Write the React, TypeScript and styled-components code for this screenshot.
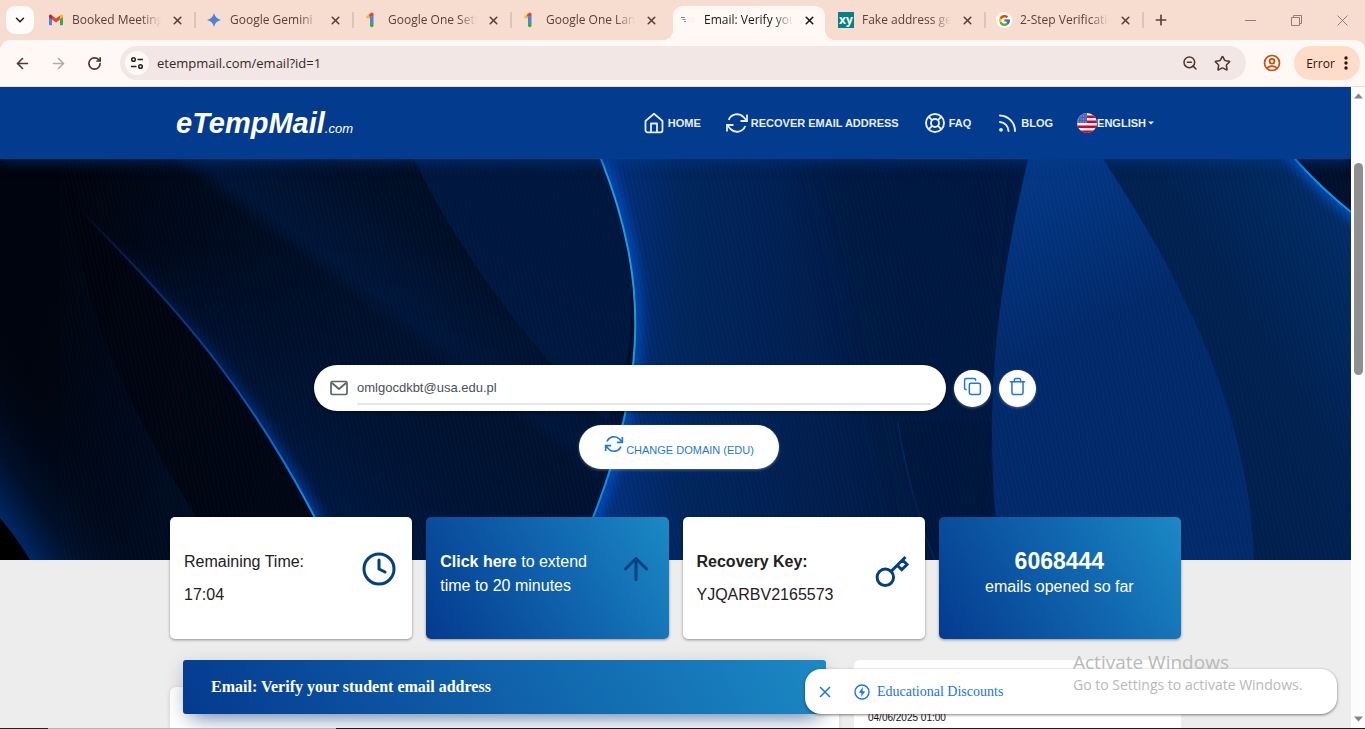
import React from "react";
import styled, { createGlobalStyle, css } from "styled-components";
import { FcGoogle } from "react-icons/fc";
import { ArrowUp, Clock, Copy, Trash, ZoomOut, Star, ArrowLeft, ArrowRight, X, Plus, ChevronDown, RotateCw } from "lucide-react";

const ui = `"Segoe UI", "Open Sans", "Noto Sans", sans-serif`;
const sans = `Arial, "Liberation Sans", sans-serif`;
const serif = `"Times New Roman", "Liberation Serif", serif`;

const GlobalStyle = createGlobalStyle`
  *, *::before, *::after { box-sizing: border-box; }
  body { margin: 0; font-family: ${sans}; overflow: hidden; }
  button, input { font: inherit; color: inherit; border: 0; padding: 0; background: none; }
  button { cursor: pointer; }
  a { color: inherit; text-decoration: none; }
  p, h1, h2, h3 { margin: 0; font-weight: 400; }
  svg { display: block; flex: none; }
`;

const Window = styled.div`
  display: flex;
  flex-direction: column;
  height: 100vh;
  background: #f7ddd0;
`;

/* ---------- browser chrome ---------- */

const TabStrip = styled.div`
  display: flex;
  align-items: center;
  flex: none;
  height: 40px;
  padding-left: 6px;
  font-family: ${ui};
  font-size: 12px;
  color: #5a4037;
`;

const TabSearch = styled.button`
  display: grid;
  place-items: center;
  width: 28px;
  height: 28px;
  margin-right: 4px;
  border-radius: 9px;
  background: #fffcfb;
  color: #1f1a18;
`;

const TabItem = styled.div<{ $active?: boolean; $divider?: boolean }>`
  position: relative;
  display: flex;
  align-items: center;
  gap: 8px;
  flex: 0 1 158px;
  min-width: 0;
  height: 40px;
  padding: 0 11px 0 10px;
  isolation: isolate;

  ${(p) =>
    p.$divider &&
    css`
      &::after {
        content: "";
        position: absolute;
        right: 0;
        top: 12px;
        width: 2px;
        height: 16px;
        background: #dac5bb;
      }
    `}

  ${(p) =>
    p.$active &&
    css`
      color: #1f1a18;
      &::before {
        content: "";
        position: absolute;
        z-index: -1;
        inset: 6px 3px 0;
        border-radius: 10px 10px 0 0;
        background: #fff8f5;
      }
      &::after {
        content: "";
        position: absolute;
        z-index: -1;
        left: -7px;
        right: -7px;
        bottom: 0;
        height: 10px;
        background:
          radial-gradient(circle at 0 0, transparent 10px, #fff8f5 10px) left / 10px 10px no-repeat,
          radial-gradient(circle at 100% 0, transparent 10px, #fff8f5 10px) right / 10px 10px no-repeat;
      }
    `}
`;

const TabTitle = styled.span`
  flex: 1;
  min-width: 0;
  overflow: hidden;
  white-space: nowrap;
  line-height: 20px;
  mask-image: linear-gradient(to right, #000 78%, transparent 100%);
`;

const TabClose = styled.button`
  display: grid;
  place-items: center;
  width: 16px;
  height: 16px;
`;

const NewTab = styled.button`
  display: grid;
  place-items: center;
  width: 34px;
  height: 28px;
`;

const WindowControls = styled.div`
  display: flex;
  margin-left: auto;
  color: #8f7d75;
`;

const WindowButton = styled.button`
  display: grid;
  place-items: center;
  width: 46px;
  height: 40px;
`;

const Toolbar = styled.div`
  display: flex;
  align-items: center;
  flex: none;
  height: 47px;
  padding: 0 5px 0 4px;
  border-radius: 10px 10px 0 0;
  border-bottom: 1px solid #f1ddd4;
  background: #fff8f5;
  color: #50372d;
  font-family: ${ui};
`;

const ToolButton = styled.button<{ $muted?: boolean; $accent?: boolean }>`
  display: grid;
  place-items: center;
  width: 36px;
  height: 34px;
  color: ${(p) => (p.$accent ? "#c84e0c" : p.$muted ? "#b5aaa6" : "inherit")};
`;

const Omnibox = styled.div`
  display: flex;
  align-items: center;
  flex: 1;
  min-width: 0;
  height: 34px;
  margin: 0 8px;
  padding: 0 8px 0 5px;
  border-radius: 17px;
  background: #f2e7e4;
`;

const SiteInfo = styled.button`
  display: grid;
  place-items: center;
  width: 24px;
  height: 24px;
  border-radius: 50%;
  background: #fff8f5;
  color: #2b211d;
`;

const UrlInput = styled.input`
  flex: 1;
  min-width: 0;
  margin-left: 8px;
  outline: 0;
  color: #332a27;
  font-size: 13px;
  line-height: 20px;
`;

const OmniButton = styled(ToolButton)`
  width: 32px;
`;

const ErrorMenu = styled.button`
  display: flex;
  align-items: center;
  justify-content: center;
  gap: 9px;
  width: 66px;
  height: 34px;
  margin-left: 4px;
  border-radius: 17px;
  background: #ffdcc9;
  color: #33120a;
  font-size: 12px;
`;

/* ---------- page viewport ---------- */

const Viewport = styled.div`
  position: relative;
  display: flex;
  flex: 1;
  min-height: 0;
`;

const Page = styled.div`
  flex: 1;
  min-width: 0;
  overflow: hidden;
  background: #ededed;
  color: #212121;
`;

const Scrollbar = styled.div`
  display: flex;
  flex-direction: column;
  align-items: center;
  width: 14px;
  padding: 6px 0;
  background: #fcfcfc;
`;

const Thumb = styled.div`
  width: 9px;
  height: 212px;
  margin: 64px 0 auto;
  border-radius: 5px;
  background: #8f8f8f;
`;

const Header = styled.header`
  position: relative;
  z-index: 1;
  background: #033b8e;
  box-shadow: 0 4px 12px rgba(3, 59, 142, 0.5);
`;

const Container = styled.div`
  width: min(1011px, calc(100% - 32px));
  margin: 0 auto;
`;

const HeaderRow = styled(Container)`
  display: flex;
  align-items: center;
  justify-content: space-between;
  height: 72px;
  padding: 0 27px 0 6px;
`;

const Logo = styled.a`
  padding-top: 6px;
  color: #fff;
  font-size: 29px;
  font-weight: 700;
  font-style: italic;
  line-height: 36px;
`;

const LogoSuffix = styled.span`
  font-size: 13px;
  font-weight: 400;
`;

const Nav = styled.nav`
  display: flex;
  align-items: center;
  gap: 24px;
  color: #e9eef7;
  font-size: 11px;
  font-weight: 700;
  line-height: 24px;
  text-transform: uppercase;
`;

const NavLink = styled.a`
  display: flex;
  align-items: center;
  gap: 2px;
  white-space: nowrap;
`;

const LanguageButton = styled.button`
  display: flex;
  align-items: center;
  text-transform: uppercase;
`;

const Hero = styled.section`
  position: relative;
  height: 401px;
  padding: 206px 0 0 7px;
  background: #000d24;
`;

const HeroArt = styled.svg`
  position: absolute;
  inset: 0;
  width: 100%;
  height: 100%;
`;

const Mailbox = styled.div`
  position: relative;
  display: flex;
  align-items: center;
  justify-content: center;
`;

const AddressPill = styled.label`
  display: flex;
  align-items: center;
  gap: 9px;
  flex: 0 1 632px;
  height: 46px;
  margin-right: 8px;
  padding: 0 15px 0 16px;
  border-radius: 23px;
  background: #fff;
  color: #5a616b;
  box-shadow: 0 1px 3px rgba(0, 0, 0, 0.5);
`;

const AddressInput = styled.input`
  flex: 1;
  min-width: 0;
  height: 33px;
  border-bottom: 2px solid #e6e6e6;
  outline: 0;
  color: #495057;
  font-size: 13px;
`;

const RoundButton = styled.button`
  display: flex;
  justify-content: center;
  width: 37px;
  height: 37px;
  margin-right: 8px;
  padding-top: 7px;
  border-radius: 50%;
  background: #fff;
  color: #1f78d8;
  box-shadow: 0 1px 3px rgba(255, 255, 255, 0.3);
`;

const DomainButton = styled.button`
  position: relative;
  display: flex;
  align-items: baseline;
  justify-content: center;
  gap: 2px;
  width: 200px;
  height: 44px;
  margin: 14px auto 0;
  padding-top: 9px;
  border-radius: 22px;
  background: #fff;
  color: #1f78d8;
  font-size: 11px;
  line-height: 20px;
  text-transform: uppercase;
  box-shadow: 0 1px 3px rgba(255, 255, 255, 0.3);
`;

const Stats = styled(Container)`
  position: relative;
  display: grid;
  grid-template-columns: repeat(4, 1fr);
  gap: 14px;
  margin-top: -43px;
`;

const StatCard = styled.article<{ $blue?: boolean; $center?: boolean }>`
  display: flex;
  justify-content: ${(p) => (p.$center ? "center" : "space-between")};
  height: 122px;
  padding: 33px 15px 0 14px;
  border-radius: 5px;
  background: ${(p) => (p.$blue ? "linear-gradient(60deg, #043a8f 0%, #1168b0 60%, #1b89c4 100%)" : "#fff")};
  color: ${(p) => (p.$blue ? "#fff" : "#212121")};
  text-align: ${(p) => (p.$center ? "center" : "left")};
  font-size: 16px;
  line-height: 24px;
  box-shadow: 0 1px 3px rgba(0, 0, 0, 0.4);
`;

const StatValue = styled.p`
  margin-top: 9px;
`;

const StatNumber = styled.h3`
  margin-bottom: 3px;
  font-size: 23px;
  font-weight: 700;
  line-height: 22px;
`;

const ExtendButton = styled.button`
  width: 160px;
  height: 48px;
  text-align: left;
`;

const StatIcon = styled.span`
  padding-top: 1px;
  color: #03407f;
`;

const Columns = styled(Container)`
  display: grid;
  grid-template-columns: 1fr 327px;
  gap: 15px;
  padding-top: 21px;
`;

/* flow-root keeps the banner's lift over the card's top edge from collapsing */
const MailCard = styled.article`
  display: flow-root;
  height: 300px;
  margin-top: 27px;
  padding: 0 13px;
  border-radius: 6px;
  background: #fff;
  box-shadow: 0 1px 4px rgba(0, 0, 0, 0.14);
`;

const MailTitle = styled.h2`
  display: flex;
  align-items: center;
  height: 54px;
  margin-top: -27px;
  padding: 0 28px;
  border-radius: 3px;
  background: linear-gradient(60deg, #043a8f 0%, #1b89c4 100%);
  color: #fff;
  font-family: ${serif};
  font-size: 16px;
  font-weight: 700;
  box-shadow: 0 12px 20px -10px rgba(6, 65, 140, 0.6), 0 4px 20px 0 rgba(0, 0, 0, 0.14);
`;

const SideCard = styled.aside`
  height: 300px;
  padding: 52px 14px 0;
  border-radius: 6px;
  background: #fff;
  color: #111;
  font-size: 10px;
  line-height: 12px;
`;

const Toast = styled.div`
  position: absolute;
  right: 28px;
  bottom: 14px;
  display: flex;
  align-items: center;
  width: 532px;
  height: 45px;
  padding: 0 12px;
  border-radius: 16px;
  background: #fff;
  color: #1a73e8;
  font-family: ${serif};
  font-size: 14px;
  line-height: 16px;
  box-shadow: 0 1px 3px rgba(0, 0, 0, 0.5);
`;

const ToastClose = styled.button`
  display: grid;
  place-items: center;
  width: 16px;
  height: 16px;
`;

const ToastLink = styled.a`
  display: flex;
  align-items: center;
  gap: 7px;
  margin-left: 21px;
`;

const Watermark = styled.div`
  position: absolute;
  right: 30px;
  bottom: 33px;
  width: 262px;
  color: #b9b9b9;
  font-family: ${ui};
  font-size: 14px;
  line-height: 20px;
  white-space: nowrap;
  pointer-events: none;
`;

const WatermarkTitle = styled.p`
  font-size: 19px;
  line-height: 25px;
`;

const TaskbarEdge = styled.div`
  flex: none;
  height: 1px;
  background: linear-gradient(to right, #222 48px, #b4b4b4 48px 336px, #1c1c1c 336px);
`;

/* ---------- drawings ---------- */

const GmailIcon = () => (
  <svg width="16" height="16" viewBox="0 0 16 16">
    <path d="M1 4v8.300a1 1 0 0 0 1 1h2V6.500z" fill="#4285f4" />
    <path d="M15 4v8.300a1 1 0 0 1-1 1h-2V6.500z" fill="#34a853" />
    <path d="M12 3.500v4L15 5.200V4a1.500 1.500 0 0 0-2.400-1.200z" fill="#fbbc04" />
    <path d="M4 7.500v-4l4 3 4-3v4l-4 3z" fill="#ea4335" />
    <path d="M1 4v1.200l3 2.300v-4l-.6-.7A1.500 1.500 0 0 0 1 4z" fill="#c5221f" />
  </svg>
);

const GeminiIcon = () => (
  <svg width="16" height="16" viewBox="0 0 16 16">
    <defs>
      <linearGradient id="gem" x1="0" y1="0" x2="1" y2="1">
        <stop offset="0" stopColor="#9a72c8" />
        <stop offset=".45" stopColor="#4d7fd6" />
        <stop offset="1" stopColor="#2f9bdc" />
      </linearGradient>
    </defs>
    <path d="M8 1C8.800 4.800 11.200 7.200 15 8c-3.800.8-6.200 3.200-7 7-.8-3.800-3.200-6.200-7-7 3.800-.8 6.200-3.200 7-7z" fill="url(#gem)" />
  </svg>
);

const GoogleOneIcon = () => (
  <svg width="16" height="16" viewBox="0 0 16 16">
    <path d="M2.200 5.200 6 1.900 7.500 5.800H3z" fill="#fbbc04" stroke="#fbbc04" strokeLinejoin="round" />
    <path d="M5.200 4.500V2.600L7 1a1.500 1.500 0 0 1 2.500 1.200v2.300z" fill="#ea4335" />
    <path d="M6 4.200h3.500v6.600H6z" fill="#4285f4" />
    <path d="M6 10.500h3.500v2.900a1.700 1.700 0 0 1-3.500 0z" fill="#34a853" />
  </svg>
);

const SpeedMailIcon = () => (
  <svg width="16" height="16" viewBox="0 0 16 16">
    <path d="M1 5.500h4M2.500 7.500h3M4 9.500h2" stroke="#8c8784" />
    <path d="M7 5h8v6H7z" fill="#f8f5f4" />
  </svg>
);

const XyBadge = styled.span`
  display: grid;
  place-items: center;
  flex: none;
  width: 16px;
  height: 16px;
  background: #067f86;
  color: #fff;
  font-size: 12px;
  font-weight: 700;
  line-height: 14px;
`;

const GoogleBadge = styled.span`
  display: grid;
  place-items: center;
  flex: none;
  width: 16px;
  height: 16px;
  border-radius: 50%;
  background: #fff;
`;

const TuneIcon = () => (
  <svg width="14" height="14" viewBox="0 0 14 14" fill="none" stroke="currentColor" strokeWidth="1.500">
    <circle cx="3.500" cy="3.500" r="1.800" />
    <path d="M7.500 3.500H13M1 10.500h5.500" />
    <circle cx="10.500" cy="10.500" r="1.800" />
  </svg>
);

const ProfileIcon = () => (
  <svg width="18" height="18" viewBox="0 0 18 18" fill="none" stroke="currentColor" strokeWidth="1.700">
    <circle cx="9" cy="9" r="7.500" />
    <circle cx="9" cy="7.200" r="2.400" />
    <path d="M3.800 14c2.800-2.600 7.600-2.600 10.400 0" />
  </svg>
);

const HomeIcon = () => (
  <svg width="24" height="24" viewBox="0 0 24 24" fill="none" stroke="currentColor" strokeWidth="1.800" strokeLinejoin="round">
    <path d="M3.500 10 12 2.800l8.500 7.200v9.300a2 2 0 0 1-2 2h-13a2 2 0 0 1-2-2z" />
    <path d="M9 21v-8.500h6V21" />
  </svg>
);

const RefreshIcon = ({ size, weight }: { size: number; weight: number }) => (
  <svg width={size} height={size} viewBox="0 0 24 24" fill="none" stroke="currentColor" strokeWidth={weight}>
    <path d="M22 3.500V10h-6.500M2 20.500V14h6.500" />
    <path d="M3.700 9A9 9 0 0 1 18.500 6L22 10M2 14l3.500 4A9 9 0 0 0 20.300 15" />
  </svg>
);

const LifeRingIcon = () => (
  <svg width="24" height="24" viewBox="0 0 24 24" fill="none" stroke="currentColor" strokeWidth="1.900">
    <circle cx="12" cy="12" r="9" />
    <circle cx="12" cy="12" r="4" />
    <path d="m5.600 5.600 3.500 3.500M14.900 14.900l3.500 3.500M18.400 5.600l-3.500 3.500M9.100 14.900l-3.500 3.500" />
  </svg>
);

const RssIcon = () => (
  <svg width="24" height="24" viewBox="0 0 24 24" fill="none" stroke="currentColor" strokeWidth="1.900" strokeLinecap="round">
    <path d="M5 11a9 9 0 0 1 8.500 9M5 4.500A15.500 15.500 0 0 1 20 20" />
    <circle cx="6" cy="18.800" r="1.900" fill="currentColor" stroke="none" />
  </svg>
);

const FlagIcon = () => (
  <svg width="20" height="20" viewBox="0 0 20 20">
    <clipPath id="flagClip">
      <circle cx="10" cy="10" r="10" />
    </clipPath>
    <g clipPath="url(#flagClip)">
      <path fill="#f2f2f2" d="M0 0h20v20H0z" />
      <path fill="#d80027" d="M10 2.500h10V5H10zM10 7.500h10V10H10zM0 12.500h20V15H0zM0 17.500h20V20H0z" />
      <path fill="#4a62bd" d="M0 0h10v10H0z" />
      <path d="M1 3h9M1 6h9M1 9h9" stroke="#9aa9e0" strokeDasharray="1 1.500" />
    </g>
  </svg>
);

const MailIcon = () => (
  <svg width="18" height="16" viewBox="0 0 18 16" fill="none" stroke="currentColor" strokeWidth="1.700" strokeLinejoin="round">
    <rect x="1" y="1.500" width="16" height="13" rx="1.500" />
    <path d="m2 3 7 6 7-6" />
  </svg>
);

const KeyIcon = () => (
  <svg width="36" height="39" viewBox="0 -2 24 26" fill="none" stroke="currentColor" strokeWidth="2">
    <path d="M21 2l-2 2m-7.610 7.610a5.500 5.500 0 1 1-7.778 7.778 5.500 5.500 0 0 1 7.777-7.777zm0 0L15.500 7.500m0 0l3 3L22 7l-3-3m-3.500 3.500L19 4" />
  </svg>
);

const BoltIcon = () => (
  <svg width="16" height="16" viewBox="0 0 16 16" fill="none" stroke="currentColor" strokeWidth="1.400">
    <circle cx="8" cy="8" r="7" />
    <path d="M8.800 3 4.900 8.800h2.600L7.200 13l3.900-5.800H8.500z" fill="currentColor" stroke="none" />
  </svg>
);

const Waves = () => (
  <HeroArt viewBox="0 159 1351 401" preserveAspectRatio="none" aria-hidden="true">
    <defs>
      <linearGradient id="base" gradientUnits="userSpaceOnUse" x1="60" x2="620" y1="260" y2="420">
        <stop offset="0" stopColor="#00040e" />
        <stop offset=".25" stopColor="#000a1e" />
        <stop offset=".55" stopColor="#001029" />
        <stop offset="1" stopColor="#001130" />
      </linearGradient>
      <linearGradient id="bandD" gradientUnits="userSpaceOnUse" x1="277" y1="241" x2="385" y2="97">
        <stop offset="0" stopColor="#001c4a" stopOpacity="0" />
        <stop offset=".1" stopColor="#001a44" stopOpacity=".65" />
        <stop offset=".55" stopColor="#000e26" stopOpacity=".7" />
        <stop offset="1" stopColor="#000b1e" stopOpacity=".9" />
      </linearGradient>
      <linearGradient id="sail" gradientUnits="userSpaceOnUse" x1="215" y1="430" x2="480" y2="300">
        <stop offset="0" stopColor="#00286a" stopOpacity=".8" />
        <stop offset=".25" stopColor="#001c4c" stopOpacity=".7" />
        <stop offset="1" stopColor="#001538" stopOpacity=".3" />
      </linearGradient>
      <linearGradient id="fadeDown" x1="0" x2="0" y1="0" y2="1">
        <stop offset=".2" stopColor="#000" />
        <stop offset=".95" stopColor="#fff" />
      </linearGradient>
      <mask id="lower" maskUnits="userSpaceOnUse" x="0" y="159" width="1351" height="401">
        <path fill="url(#fadeDown)" d="M0 159h1351v401H0z" />
      </mask>
      <linearGradient id="edgeA" x1="0" x2="0" y1="0" y2="1">
        <stop offset="0" stopColor="#0054c8" stopOpacity="0" />
        <stop offset=".25" stopColor="#0a3a90" stopOpacity=".8" />
        <stop offset=".5" stopColor="#0a4ab4" />
        <stop offset=".8" stopColor="#0a88f0" />
        <stop offset="1" stopColor="#22b4ff" />
      </linearGradient>
      <linearGradient id="edgeB" x1="0" x2="0" y1="0" y2="1">
        <stop offset="0" stopColor="#20a4e8" />
        <stop offset=".5" stopColor="#169fd8" />
        <stop offset="1" stopColor="#1488dc" />
      </linearGradient>
      <linearGradient id="rightField" gradientUnits="userSpaceOnUse" x1="600" x2="1000" y1="0" y2="0">
        <stop offset="0" stopColor="#033284" />
        <stop offset=".2" stopColor="#01265f" />
        <stop offset=".6" stopColor="#011d4c" />
        <stop offset="1" stopColor="#011a44" />
      </linearGradient>
      <linearGradient id="leaf" x1="0" x2="0.3" y1="0" y2="1">
        <stop offset="0" stopColor="#043b8c" />
        <stop offset=".5" stopColor="#022a6c" />
        <stop offset="1" stopColor="#022b6c" />
      </linearGradient>
      <linearGradient id="farRight" x1="0" x2="1" y1="1" y2="0">
        <stop offset="0" stopColor="#011d4a" />
        <stop offset=".6" stopColor="#012252" />
        <stop offset="1" stopColor="#02306f" />
      </linearGradient>
      <linearGradient id="cornerL" gradientUnits="userSpaceOnUse" x1="10" y1="550" x2="110" y2="480">
        <stop offset="0" stopColor="#00307c" />
        <stop offset=".4" stopColor="#001434" stopOpacity=".7" />
        <stop offset="1" stopColor="#000612" stopOpacity="0" />
      </linearGradient>
      <filter id="soft" x="-20%" y="-20%" width="140%" height="140%">
        <feGaussianBlur stdDeviation="14" />
      </filter>
      <filter id="glow" x="-40%" y="-20%" width="180%" height="140%">
        <feGaussianBlur stdDeviation="5" />
      </filter>
      <pattern id="grain" width="4" height="4" patternUnits="userSpaceOnUse" patternTransform="rotate(-12)">
        <path d="M1 0v4" stroke="#1a62c8" strokeOpacity=".05" />
        <path d="M3 0v4" stroke="#000" strokeOpacity=".08" />
      </pattern>
      <clipPath id="rightOfB">
        <path d="M601 159C649 280 652 390 575 560H1351V159z" />
      </clipPath>
      <clipPath id="rightOfA">
        <path d="M40 159L80 210C180 310 260 400 336 560H1351V159z" />
      </clipPath>
      <clipPath id="belowG">
        <path d="M1295 159 Q1321 188 1351 212V560H1100V159z" />
      </clipPath>
    </defs>

    <path fill="url(#base)" d="M0 159h1351v401H0z" />
    <path fill="#00030c" opacity=".7" d="M65 159C75 300 130 420 225 560H336C260 400 180 310 80 210z" />
    <path fill="url(#cornerL)" d="M0 330C50 400 90 480 140 560H0z" />
    <path fill="#000" d="M0 518Q17 538 30 560H0z" />

    <g clipPath="url(#rightOfA)">
      <path fill="url(#bandD)" d="M60 159H660V560H60z" />
    </g>
    <g clipPath="url(#rightOfA)" mask="url(#lower)">
      <path fill="url(#sail)" d="M30 159H660V560H336z" />
      <path d="M80 210C180 310 260 400 336 560" fill="none" stroke="#004fd0" strokeOpacity=".6" strokeWidth="14" filter="url(#glow)" />
    </g>
    <path fill="#001a44" opacity=".85" d="M414 159C450 235 520 340 607 422C648 330 632 240 601 159z" />
    <path d="M80 210C180 310 260 400 336 560" fill="none" stroke="url(#edgeA)" strokeWidth="2" />

    <g clipPath="url(#rightOfB)">
      <path fill="url(#rightField)" d="M560 159h791v401H560z" />
      <path fill="#01153b" opacity=".4" filter="url(#soft)" d="M800 140H1020L985 580H900C880 440 850 300 800 140z" />
      <path d="M601 159C649 280 652 390 575 560" fill="none" stroke="#0356d0" strokeOpacity=".6" strokeWidth="16" filter="url(#glow)" />
    </g>
    <path d="M601 159C649 280 652 390 575 560" fill="none" stroke="url(#edgeB)" strokeWidth="2" />
    <path fill="#011338" opacity=".4" d="M898 422C905 470 922 530 935 560H1000L992 422z" />
    <path d="M898 422C905 470 922 530 935 560" fill="none" stroke="#02357c" strokeOpacity=".7" />

    <path fill="url(#farRight)" d="M1103 159H1351V560H1254C1250 420 1190 290 1103 159z" />
    <path fill="url(#leaf)" d="M1028 159C1000 280 980 400 1000 560H1254C1250 420 1190 290 1103 159z" />
    <g clipPath="url(#belowG)">
      <path d="M1285 148Q1321 188 1361 220" fill="none" stroke="#0358d8" strokeOpacity=".7" strokeWidth="14" filter="url(#glow)" />
    </g>
    <path fill="#00102c" d="M1295 159Q1321 188 1351 212V159z" />
    <path d="M1295 159Q1321 188 1351 212" fill="none" stroke="#1496e8" strokeWidth="2" />
    <path fill="url(#grain)" d="M60 159h1291v401H60z" />
  </HeroArt>
);

/* ---------- data ---------- */

type Tab = { title: string; icon: React.ReactNode; active?: boolean; divider?: boolean };

const tabs: Tab[] = [
  { title: "Booked Meeting", icon: <GmailIcon />, divider: true },
  { title: "Google Gemini", icon: <GeminiIcon />, divider: true },
  { title: "Google One Settings", icon: <GoogleOneIcon />, divider: true },
  { title: "Google One Landing", icon: <GoogleOneIcon /> },
  { title: "Email: Verify your student", icon: <SpeedMailIcon />, active: true },
  { title: "Fake address generator", icon: <XyBadge>xy</XyBadge>, divider: true },
  { title: "2-Step Verification", icon: <GoogleBadge><FcGoogle size={13} /></GoogleBadge>, divider: true },
];

const links = [
  { label: "Home", icon: <HomeIcon /> },
  { label: "Recover email address", icon: <RefreshIcon size={24} weight={1.8} /> },
  { label: "FAQ", icon: <LifeRingIcon /> },
  { label: "Blog", icon: <RssIcon /> },
];

export default function App() {
  return (
    <Window>
      <GlobalStyle />
      <TabStrip>
        <TabSearch aria-label="Search tabs"><ChevronDown size={14} strokeWidth={2.5} /></TabSearch>
        {tabs.map((t) => (
          <TabItem key={t.title} $active={t.active} $divider={t.divider}>
            {t.icon}
            <TabTitle>{t.title}</TabTitle>
            <TabClose aria-label="Close tab"><X size={13} strokeWidth={3} /></TabClose>
          </TabItem>
        ))}
        <NewTab aria-label="New tab"><Plus size={16} strokeWidth={2.5} /></NewTab>
        <WindowControls>
          <WindowButton aria-label="Minimize">
            <svg width="11" height="11" viewBox="0 0 11 11" stroke="currentColor"><path d="M0 5.500h11" /></svg>
          </WindowButton>
          <WindowButton aria-label="Restore">
            <svg width="11" height="11" viewBox="0 0 11 11" fill="none" stroke="currentColor"><path d="M.5 2.500h8v8h-8zM2.500 2.500v-2h8v8h-2" /></svg>
          </WindowButton>
          <WindowButton aria-label="Close">
            <svg width="11" height="11" viewBox="0 0 11 11" stroke="currentColor"><path d="m.5.5 10 10m0-10-10 10" /></svg>
          </WindowButton>
        </WindowControls>
      </TabStrip>

      <Toolbar>
        <ToolButton aria-label="Back"><ArrowLeft size={17} strokeWidth={2.3} /></ToolButton>
        <ToolButton aria-label="Forward" $muted><ArrowRight size={17} strokeWidth={2.3} /></ToolButton>
        <ToolButton aria-label="Reload"><RotateCw size={15} strokeWidth={2.7} /></ToolButton>
        <Omnibox>
          <SiteInfo aria-label="Site information"><TuneIcon /></SiteInfo>
          <UrlInput aria-label="Address" defaultValue="etempmail.com/email?id=1" />
          <OmniButton aria-label="Zoom"><ZoomOut size={16} strokeWidth={2.3} /></OmniButton>
          <OmniButton aria-label="Bookmark"><Star size={17} strokeWidth={2.2} /></OmniButton>
        </Omnibox>
        <ToolButton aria-label="Profile" $accent><ProfileIcon /></ToolButton>
        <ErrorMenu>
          Error
          <svg width="4" height="16" viewBox="0 0 4 16" fill="currentColor">
            <circle cx="2" cy="3" r="1.700" /><circle cx="2" cy="8" r="1.700" /><circle cx="2" cy="13" r="1.700" />
          </svg>
        </ErrorMenu>
      </Toolbar>

      <Viewport>
        <Page>
          <Header>
            <HeaderRow>
              <Logo href="#">eTempMail<LogoSuffix>.com</LogoSuffix></Logo>
              <Nav>
                {links.map((l) => (
                  <NavLink key={l.label} href="#">{l.icon}{l.label}</NavLink>
                ))}
                <LanguageButton>
                  <FlagIcon />
                  English
                  <svg width="8" height="4" viewBox="0 0 8 4" fill="currentColor"><path d="M2 .5h6l-3 3z" /></svg>
                </LanguageButton>
              </Nav>
            </HeaderRow>
          </Header>

          <Hero>
            <Waves />
            <Mailbox>
              <AddressPill>
                <MailIcon />
                <AddressInput aria-label="Email address" readOnly defaultValue="omlgocdkbt@usa.edu.pl" />
              </AddressPill>
              <RoundButton aria-label="Copy"><Copy size={19} strokeWidth={1.9} /></RoundButton>
              <RoundButton aria-label="Delete"><Trash size={19} strokeWidth={1.9} /></RoundButton>
            </Mailbox>
            <DomainButton>
              <RefreshIcon size={20} weight={2} />
              Change domain (edu)
            </DomainButton>
          </Hero>

          <Stats>
            <StatCard>
              <div>
                <p>Remaining Time:</p>
                <StatValue>17:04</StatValue>
              </div>
              <StatIcon><Clock size={36} strokeWidth={2} /></StatIcon>
            </StatCard>
            <StatCard $blue>
              <ExtendButton><b>Click here</b> to extend time to 20 minutes</ExtendButton>
              <StatIcon><ArrowUp size={36} strokeWidth={2} /></StatIcon>
            </StatCard>
            <StatCard>
              <div>
                <p><b>Recovery Key:</b></p>
                <StatValue>YJQARBV2165573</StatValue>
              </div>
              <StatIcon><KeyIcon /></StatIcon>
            </StatCard>
            <StatCard $blue $center>
              <div>
                <StatNumber>6068444</StatNumber>
                <p>emails opened so far</p>
              </div>
            </StatCard>
          </Stats>

          <Columns>
            <MailCard>
              <MailTitle>Email: Verify your student email address</MailTitle>
            </MailCard>
            <SideCard>
              <time>04/06/2025 01:00</time>
            </SideCard>
          </Columns>
        </Page>

        <Scrollbar aria-hidden="true">
          <svg width="9" height="6" viewBox="0 0 9 6" fill="#858585"><path d="M0 5.500h9L4.500.5z" /></svg>
          <Thumb />
          <svg width="9" height="6" viewBox="0 0 9 6" fill="#858585"><path d="M0 .5h9l-4.500 5z" /></svg>
        </Scrollbar>

        <Toast>
          <ToastClose aria-label="Dismiss">
            <svg width="12" height="12" viewBox="0 0 12 12" stroke="currentColor" strokeWidth="1.500"><path d="m1 1 10 10m0-10L1 11" /></svg>
          </ToastClose>
          <ToastLink href="#"><BoltIcon />Educational Discounts</ToastLink>
        </Toast>
        <Watermark>
          <WatermarkTitle>Activate Windows</WatermarkTitle>
          <p>Go to Settings to activate Windows.</p>
        </Watermark>
      </Viewport>
      <TaskbarEdge />
    </Window>
  );
}
